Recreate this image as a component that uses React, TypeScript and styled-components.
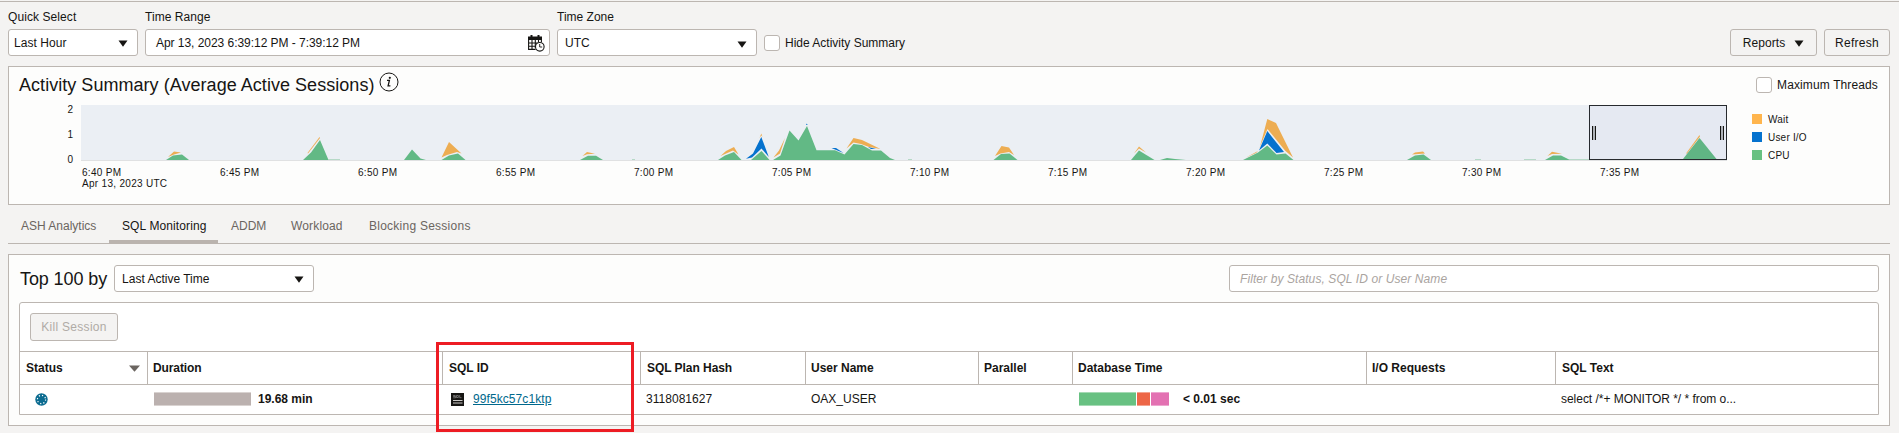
import React from "react";
import styled, { createGlobalStyle } from "styled-components";

const Global = createGlobalStyle`
  * { box-sizing: border-box; }
  html, body { margin: 0; height: 433px; overflow: hidden; background: #f4f3f2; }
  body { font: 12px/14px "Liberation Sans", Arial, sans-serif; color: #161513; }
`;
const line = "#bcb6b1";

const Page = styled.main`
  position: relative;
  height: 433px;
  margin-top: 1px;
  border-top: 1px solid ${line};
  padding: 8px 9px 0 8px;
`;
const T = styled.span<{ $ls?: number }>`
  white-space: nowrap;
  letter-spacing: ${(p) => p.$ls ?? 0}px;
`;
const Toolbar = styled.div`
  display: flex;
  align-items: flex-end;
  gap: 7px;
  height: 46px;
`;
const Field = styled.label`
  display: flex;
  flex-direction: column;
  gap: 5px;
`;
const Box = styled.div<{ $w?: number; $pl?: number; $pr?: number }>`
  display: flex;
  align-items: center;
  justify-content: space-between;
  width: ${(p) => p.$w}px;
  height: 27px;
  padding: 0 ${(p) => p.$pr ?? 9}px 0 ${(p) => p.$pl ?? 7}px;
  border: 1px solid ${line};
  border-radius: 3px;
  background: #fff;
`;
const Button = styled.button<{ $w: number; $h?: number; $off?: boolean }>`
  display: flex;
  align-items: center;
  justify-content: center;
  gap: 9px;
  width: ${(p) => p.$w}px;
  height: ${(p) => p.$h ?? 27}px;
  padding: 0;
  border: 1px solid ${line};
  border-radius: 3px;
  background: #f4f3f2;
  color: ${(p) => (p.$off ? "#b0aba6" : "#161513")};
  font: inherit;
`;
const Check = styled.label`
  display: flex;
  align-items: center;
  gap: 5px;
  height: 27px;
`;
const Tick = styled.i`
  width: 16px;
  height: 16px;
  border: 1px solid ${line};
  border-radius: 3px;
  background: #fff;
`;
const Spacer = styled.div`
  flex: 1;
`;
const Panel = styled.section<{ $h: number; $top: number }>`
  height: ${(p) => p.$h}px;
  margin-top: ${(p) => p.$top}px;
  border: 1px solid ${line};
  background: #fdfdfc;
`;
const PanelHead = styled.div`
  display: flex;
  align-items: center;
  height: 35px;
  padding: 0 11px 0 10px;
`;
const Heading = styled.h2<{ $ls?: number }>`
  margin: 0;
  font-size: 18px;
  line-height: 22px;
  font-weight: 400;
  white-space: nowrap;
  letter-spacing: ${(p) => p.$ls ?? 0}px;
`;
const InfoMark = styled.svg`
  margin: 0 0 5px 5px;
`;
const ChartRow = styled.div`
  display: flex;
`;
const YAxis = styled.div`
  display: flex;
  flex-direction: column;
  align-items: flex-end;
  justify-content: space-between;
  width: 72px;
  height: 62px;
  padding-right: 8px;
  margin-top: 2px;
  font-size: 10px;
  line-height: 12px;
`;
const Plot = styled.div`
  width: 1646px;
  margin-top: 3px;
`;
const Chart = styled.svg`
  display: block;
`;
const XAxis = styled.div`
  display: grid;
  grid-template-columns: repeat(12, 138px);
  width: 1656px;
  padding: 6px 0 0 1px;
  font-size: 10px;
  line-height: 11px;
  span { display: block; }
`;
const Legend = styled.div`
  display: flex;
  flex-direction: column;
  gap: 8px;
  margin: 12px 0 0 25px;
  font-size: 10px;
  line-height: 11px;
  letter-spacing: 0.2px;
`;
const LegendItem = styled.div<{ $c: string }>`
  display: flex;
  gap: 6px;
  height: 10px;
  &::before {
    content: "";
    width: 10px;
    height: 10px;
    background: ${(p) => p.$c};
  }
`;
const Tabs = styled.nav`
  display: flex;
  height: 39px;
  border-bottom: 1px solid ${line};
`;
const Tab = styled.div<{ $w: number; $on?: boolean }>`
  width: ${(p) => p.$w}px;
  height: 39px;
  padding: 14px 0 0 13px;
  white-space: nowrap;
  color: ${(p) => (p.$on ? "#161513" : "#6b6560")};
  border-bottom: ${(p) => (p.$on ? "4px solid #bab3ae" : "0")};
`;
const FilterRow = styled.div`
  display: flex;
  align-items: center;
  gap: 7px;
  padding: 10px 10px 10px 11px;
`;
const FilterBox = styled(Box)`
  color: #aaa49f;
  font-style: italic;
`;
const Table = styled.div`
  margin: 0 10px;
  height: 113px;
  border: 1px solid ${line};
  border-radius: 3px 3px 0 0;
  background: #fff;
`;
const Actions = styled.div`
  height: 48px;
  padding: 10px;
`;
const Row = styled.div<{ $head?: boolean }>`
  display: grid;
  grid-template-columns: 127px 295px 198px 165px 173px 94px 294px 189px 1fr;
  height: ${(p) => (p.$head ? 34 : 28)}px;
  border-style: solid;
  border-color: ${line};
  border-width: ${(p) => (p.$head ? "1px 0" : "0")};
  font-weight: ${(p) => (p.$head ? 700 : 400)};
`;
const Cell = styled.div<{ $rule?: boolean; $pl?: number }>`
  display: flex;
  align-items: center;
  padding: 0 7px 0 ${(p) => p.$pl ?? 6}px;
  border-left: ${(p) => (p.$rule ? `1px solid ${line}` : "1px solid transparent")};
  &:first-child { border-left: 0; }
`;
const Bar = styled.i<{ $w: number; $c: string; $edge: string }>`
  width: ${(p) => p.$w}px;
  height: 14px;
  margin-right: 1px;
  background: ${(p) => p.$c};
  border: solid ${(p) => p.$edge};
  border-width: 1px 0;
`;
const Strong = styled.b<{ $ml: number }>`
  margin-left: ${(p) => p.$ml}px;
  white-space: nowrap;
`;
const Link = styled.a`
  margin-left: 9px;
  color: #00688c;
  text-decoration: underline;
  letter-spacing: 0.08px;
`;
const StatusMark = styled.svg`
  margin-top: 1px;
`;
const Highlight = styled.div`
  position: absolute;
  left: 436px;
  top: 340px;
  width: 198px;
  height: 90px;
  border: 3px solid #ed1c24;
`;

const ArrowShape = styled.svg<{ $drop?: number }>`
  margin-top: ${(p) => p.$drop ?? 1}px;
`;
const Arrow = ({ drop }: { drop?: number }) => (
  <ArrowShape $drop={drop} width="10" height="7" viewBox="0 0 10 7">
    <path d="M.5 .5h9L5 6.8z" fill="#161513" />
  </ArrowShape>
);

const ClockShape = styled.svg`
  margin-top: 2px;
`;
const CalendarClock = () => (
  <ClockShape width="17" height="17" viewBox="0 0 17 17" fill="none">
    <path d="M3.500 0v3M10.500 0v3" stroke="#161513" strokeWidth="2" />
    <path d="M0 1.500h14v3.500H0z" fill="#161513" />
    <path d="M.6 5v9.400h7M.6 8h9M.6 11.200h8M4 5v9.400M7.300 5v8M10.500 5v2M13.400 5v2" stroke="#161513" strokeWidth="1.100" />
    <circle cx="11.800" cy="11.800" r="4.300" fill="#fff" stroke="#161513" strokeWidth="1.100" />
    <path d="M11.700 9v3h2.500" stroke="#161513" strokeWidth=".9" />
  </ClockShape>
);

const GREEN = "#62b985";
const BLUE = "#0572ce";
const ORANGE = "#edad52";

const shapes: [string, string][] = [
  [ORANGE, "168,157 174,151.500 181,152.500 174,154.500"],
  [GREEN, "166,160 173,155.500 182,154.500 189,160"],
  [ORANGE, "307.500,153 319.500,137 320,138 308,153.500"],
  [GREEN, "303,160 311,152.500 320,140 328.500,160"],
  [GREEN, "404,160 412,149.500 420.500,158.500 426,160"],
  [ORANGE, "441.500,157.500 449,142 461.500,153.500 457,152 447,155"],
  [GREEN, "441.500,160 449,155.500 458,153.500 465.500,160"],
  [ORANGE, "582.500,156 587,152 595,153.800 587,154.200"],
  [GREEN, "580,160 588,155.700 596,155.700 603,160"],
  [ORANGE, "720.500,156 726,151 734,147 738.500,154.500 733,150.500 725,154"],
  [GREEN, "718,160 725,155.500 734,152 741.500,160"],
  [BLUE, "746,158.700 753,153.500 761.300,137 768.800,157 761.500,148.500 752,157.500"],
  [ORANGE, "759.500,138 761.300,133.500 762.500,137 761.300,135.500"],
  [GREEN, "751,160 761.500,151 769.500,160"],
  [ORANGE, "773.500,157.500 779,150.500 785,138 780,153.500"],
  [GREEN, "773,160 780.500,155.500 789.500,130.500 798.500,140.500 807,126 816.500,150.300 835,150.300 844.500,154.500 853.500,144 862,145 872,150.500 881,150.500 890,158 895,160"],
  [BLUE, "806,125 806.800,123.500 807.600,125"],
  [BLUE, "831.500,148 836,148 843.500,153 835,149.500"],
  [ORANGE, "846.500,148.500 853.500,138 862,140 880.500,149 869,147 861,144 853.500,142.500"],
  [BLUE, "868,147 876,149 871,149"],
  [ORANGE, "995,156 1001.500,146 1009,147.500 1014,155 1009,152 1000.500,153.500"],
  [GREEN, "993.500,160 1001,154 1009.500,153.500 1017.500,160"],
  [ORANGE, "1134,153.500 1139,146.500 1146,152.500 1139,148.500"],
  [GREEN, "1131,160 1139,150.500 1154.500,160"],
  [GREEN, "1160,160 1167,158 1175,159 1186,160"],
  [ORANGE, "1246,157.500 1258,151 1256,153"],
  [ORANGE, "1259.500,148.500 1267.300,119 1276,123 1293,157.500 1285,150.500 1267.500,129 1261.500,143"],
  [BLUE, "1259,150.500 1267.300,131 1284,152 1276.500,153 1267.300,143.500"],
  [GREEN, "1243,160 1258,152.500 1267.300,145.500 1276.500,154.500 1285.500,153.500 1293.500,160"],
  [ORANGE, "1412,154.500 1415,152.500 1423,151.500 1425,153.500"],
  [GREEN, "1407,160 1415,155.500 1423.500,154.500 1431,160"],
  [ORANGE, "1547.500,156 1552,151.800 1562,153.800 1552,154"],
  [GREEN, "1545,160 1553,155.500 1561,155.500 1570,160"],
];

const ticks = ["6:40 PM", "6:45 PM", "6:50 PM", "6:55 PM", "7:00 PM", "7:05 PM", "7:10 PM", "7:15 PM", "7:20 PM", "7:25 PM", "7:30 PM", "7:35 PM"];

const ActivityChart = () => (
  <Chart width="1646" height="56" viewBox="81 105 1646 56">
    <rect x="81" y="105" width="1646" height="55" fill="#ebeff4" />
    <rect x="81" y="160" width="1646" height="1" fill="#e0e1e2" />
    {shapes.map(([c, p], i) => <polygon key={i} points={p} fill={c} />)}
    <path d="M328 159.500h12M632 159.500h3M908 159.500h4M1475 159.500h6M1524 159.500h12M1569 159.500h20" stroke="#a8d3bb" strokeWidth=".8" />
    <rect x="1589.500" y="105.500" width="137" height="54" fill="#e5e9f2" stroke="#272a2e" />
    <polygon points="1686,153.500 1699.500,135 1700,136.500 1687,153.500" fill={ORANGE} />
    <polygon points="1683,159 1699.500,138 1716.500,159" fill="#60b584" />
    {[1592, 1720].map((x) => (
      <g key={x}>
        <rect x={x} y="126" width="4" height="14" fill="#aeb2b8" />
        <path d={`M${x + 0.5} 126v14M${x + 3.5} 126v14`} stroke="#161513" />
      </g>
    ))}
  </Chart>
);

export default function App() {
  return (
    <>
      <Global />
      <Page>
        <Toolbar>
          <Field>
            <T $ls={0.08}>Quick Select</T>
            <Box $w={130} $pl={5}><T $ls={0.05}>Last Hour</T><Arrow /></Box>
          </Field>
          <Field>
            <T $ls={0.05}>Time Range</T>
            <Box $w={405} $pl={10} $pr={4}><T $ls={-0.04}>Apr 13, 2023 6:39:12 PM - 7:39:12 PM</T><CalendarClock /></Box>
          </Field>
          <Field>
            <T>Time Zone</T>
            <Box $w={200}><T>UTC</T><Arrow drop={3} /></Box>
          </Field>
          <Check><Tick /><T>Hide Activity Summary</T></Check>
          <Spacer />
          <Button $w={87}><T $ls={0.1}>Reports</T><Arrow /></Button>
          <Button $w={66}><T $ls={0.25}>Refresh</T></Button>
        </Toolbar>

        <Panel $h={139} $top={10}>
          <PanelHead>
            <Heading $ls={0.04}>Activity Summary (Average Active Sessions)</Heading>
            <InfoMark width="20" height="20" viewBox="0 0 20 20" fill="none">
              <circle cx="10" cy="10" r="9" stroke="#161513" strokeWidth="1" />
              <circle cx="10.800" cy="5.800" r="1.100" fill="#161513" />
              <path d="M8 8.400h2.400L9.100 13.800h2.300" stroke="#161513" strokeWidth="1.300" />
            </InfoMark>
            <Spacer />
            <Check><Tick /><T $ls={0.12}>Maximum Threads</T></Check>
          </PanelHead>
          <ChartRow>
            <YAxis><span>2</span><span>1</span><span>0</span></YAxis>
            <Plot>
              <ActivityChart />
              <XAxis>
                {ticks.map((t, i) => (
                  <div key={t}>
                    <T $ls={0.3}>{t}</T>
                    {i === 0 && <T $ls={0.3}>Apr 13, 2023 UTC</T>}
                  </div>
                ))}
              </XAxis>
            </Plot>
            <Legend>
              <LegendItem $c="#ffb54d">Wait</LegendItem>
              <LegendItem $c="#0572ce">User I/O</LegendItem>
              <LegendItem $c="#68c182">CPU</LegendItem>
            </Legend>
          </ChartRow>
        </Panel>

        <Tabs>
          <Tab $w={101}><T>ASH Analytics</T></Tab>
          <Tab $w={109} $on><T $ls={0.12}>SQL Monitoring</T></Tab>
          <Tab $w={60}><T>ADDM</T></Tab>
          <Tab $w={78}><T $ls={0.15}>Workload</T></Tab>
          <Tab $w={128}><T $ls={0.25}>Blocking Sessions</T></Tab>
        </Tabs>

        <Panel $h={172} $top={10}>
          <FilterRow>
            <Heading $ls={-0.1}>Top 100 by</Heading>
            <Box $w={200}><T>Last Active Time</T><Arrow drop={2} /></Box>
            <Spacer />
            <FilterBox $w={650} $pl={10}><T $ls={0.09}>Filter by Status, SQL ID or User Name</T></FilterBox>
          </FilterRow>
          <Table>
            <Actions><Button $w={88} $h={28} $off><T $ls={0.3}>Kill Session</T></Button></Actions>
            <Row $head>
              <Cell>
                <T>Status</T>
                <Spacer />
                <svg width="11" height="7" viewBox="0 0 11 7"><path d="M0 .5h11L5.500 6.800z" fill="#6b6560" /></svg>
              </Cell>
              <Cell $rule $pl={5}><T $ls={-0.1}>Duration</T></Cell>
              <Cell $rule><T>SQL ID</T></Cell>
              <Cell $rule><T $ls={-0.05}>SQL Plan Hash</T></Cell>
              <Cell $rule $pl={5}><T>User Name</T></Cell>
              <Cell $rule $pl={5}><T>Parallel</T></Cell>
              <Cell $rule $pl={5}><T>Database Time</T></Cell>
              <Cell $rule $pl={5}><T>I/O Requests</T></Cell>
              <Cell $rule $pl={6}><T>SQL Text</T></Cell>
            </Row>
            <Row>
              <Cell $pl={15}>
                <StatusMark width="13" height="13" viewBox="0 0 13 13">
                  <circle cx="6.500" cy="6.500" r="6.200" fill="#0b6b90" />
                  <circle cx="6.500" cy="6.500" r="4.100" fill="none" stroke="#fff" strokeWidth="1.200" strokeDasharray="1.200 2.020" />
                </StatusMark>
              </Cell>
              <Cell><Bar $w={97} $c="#bbb1af" $edge="#d9d3d1" /><Strong $ml={6}>19.68 min</Strong></Cell>
              <Cell $pl={8}>
                <svg width="13" height="13" viewBox="0 0 13 13">
                  <rect width="13" height="13" fill="#161513" />
                  <path d="M4.500 2.500h-2v1h2v1.300h-2.300M5.500 2.500h1.800v2H5.500zM8.700 2v2.700h1.800" stroke="#a5a5a5" strokeWidth=".6" fill="none" />
                  <path d="M2 7.500h9.500M2 10h9.500" stroke="#c9c7c5" strokeWidth="1.200" />
                </svg>
                <Link>99f5kc57c1ktp</Link>
              </Cell>
              <Cell $pl={5}><T $ls={0.03}>3118081627</T></Cell>
              <Cell $pl={5}><T>OAX_USER</T></Cell>
              <Cell />
              <Cell>
                <Bar $w={57} $c="#68c182" $edge="#a5dab4" />
                <Bar $w={13} $c="#ed6647" $edge="#f4a390" />
                <Bar $w={18} $c="#e371b2" $edge="#eda6cf" />
                <Strong $ml={13}>&lt; 0.01 sec</Strong>
              </Cell>
              <Cell />
              <Cell $pl={5}><T $ls={-0.03}>select /*+ MONITOR */ * from o...</T></Cell>
            </Row>
          </Table>
        </Panel>
        <Highlight />
      </Page>
    </>
  );
}
